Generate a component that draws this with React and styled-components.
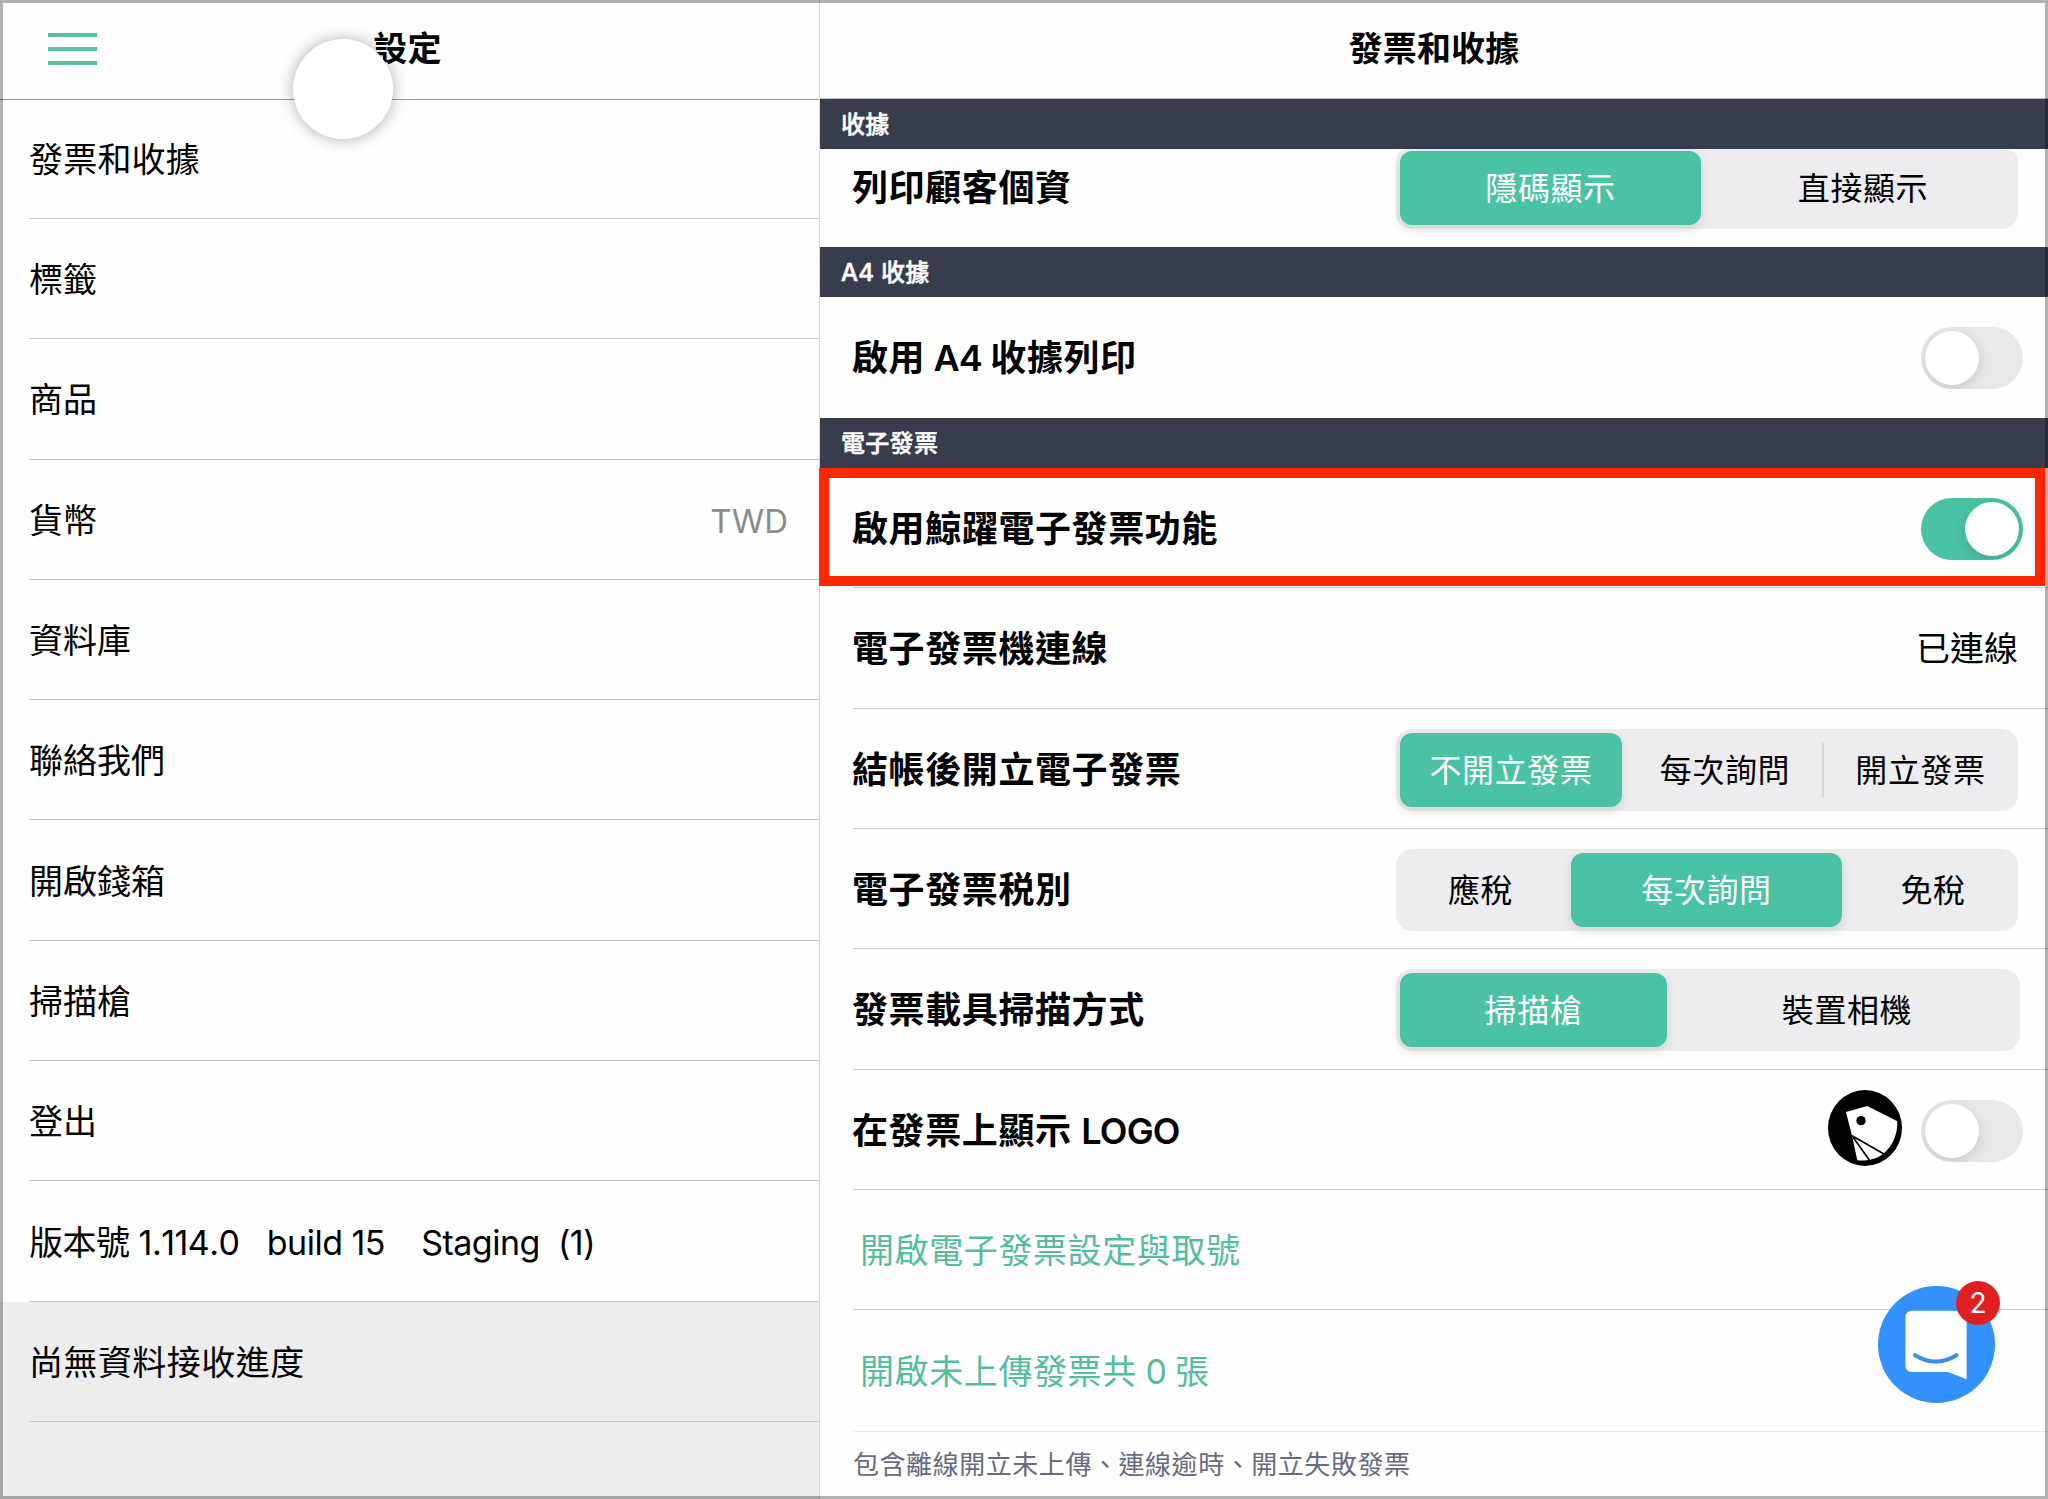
import React from "react";
import styled, { createGlobalStyle, css } from "styled-components";

const menuItems = [
    { label: "發票和收據", tracking: 0.2 },
    { label: "標籤" },
    { label: "商品" },
    { label: "貨幣", value: "TWD" },
    { label: "資料庫" },
    { label: "聯絡我們" },
    { label: "開啟錢箱" },
    { label: "掃描槍" },
    { label: "登出" },
    { label: "版本號 1.114.0   build 15    Staging  (1)", tracking: -0.5 },
    { label: "尚無資料接收進度", tracking: 0.45, muted: true },
];

const printOptions = [
    { label: "隱碼顯示", width: 301, active: true },
    { label: "直接顯示", width: 313, indent: 11 },
];
const issueOptions = [
    { label: "不開立發票", width: 222, active: true },
    { label: "每次詢問", width: 200, indent: 6 },
    { label: "開立發票", width: 192, indent: 5, divider: true },
];
const taxOptions = [
    { label: "應稅", width: 171, outdent: 10 },
    { label: "每次詢問", width: 271, active: true },
    { label: "免稅", width: 172, indent: 10 },
];
const scanOptions = [
    { label: "掃描槍", width: 267, active: true },
    { label: "裝置相機", width: 349, indent: 11 },
];

function Segmented({ options, short }) {
    return (
        <SegmentGroup $short={short}>
            {options.map((option) => (
                <Segment
                    key={option.label}
                    $width={option.width}
                    $indent={option.indent}
                    $outdent={option.outdent}
                    $active={option.active}
                    $divider={option.divider}
                >
                    {option.label}
                </Segment>
            ))}
        </SegmentGroup>
    )
}

function Switch({ on }) {
    return (
        <SwitchTrack $on={on} role="switch" aria-checked={!!on}>
            <SwitchKnob />
        </SwitchTrack>
    )
}

function ShopLogo() {
    return (
        <svg width="74" height="76" viewBox="0 0 222 228">
            <ellipse cx="111" cy="114" rx="111" ry="114" fill="#000" />
            <path d="M54 66 L118 48 L208 94 C209 132 195 166 168 190 C146 208 118 214 88 211 L72 137 Z" fill="#fff" />
            <path d="M72 137 L168 192 M72 137 L126 213" stroke="#000" strokeWidth="5" fill="none" />
            <circle cx="99" cy="92" r="14" fill="#000" />
        </svg>
    )
}

function ChatIcon() {
    return (
        <svg width="117" height="117" viewBox="0 0 350 350">
            <circle cx="175" cy="175" r="175" fill="#3391fc" />
            <path d="M102 74 H246 Q265 74 265 93 V279 L209 257 H102 Q82 257 82 237 V94 Q82 74 102 74 Z" fill="#fff" />
            <path d="M111 207 Q172 245 235 207" stroke="#3a8fe8" strokeWidth="12" strokeLinecap="round" fill="none" />
        </svg>
    )
}

export default function App() {
    return (
        <Screen>
            <GlobalStyle />
            <Sidebar>
                <Header $side>
                    <MenuButton>
                        <MenuBar />
                        <MenuBar />
                        <MenuBar />
                    </MenuButton>
                    <Title>設定</Title>
                </Header>
                <MenuList>
                    {menuItems.map((item) => (
                        <MenuItem key={item.label} $muted={item.muted}>
                            <MenuRow>
                                <MenuLabel $tracking={item.tracking}>{item.label}</MenuLabel>
                                {item.value && <MenuValue>{item.value}</MenuValue>}
                            </MenuRow>
                        </MenuItem>
                    ))}
                </MenuList>
                <SidebarRest />
                <TouchDot />
            </Sidebar>
            <Content>
                <Header>
                    <Title>發票和收據</Title>
                </Header>
                <SectionTitle>收據</SectionTitle>
                <Setting $height={98.3} $last>
                    <Label $lift={20}>列印顧客個資</Label>
                    <Segmented options={printOptions} short />
                </Setting>
                <SectionTitle>A4 收據</SectionTitle>
                <Setting $height={120.7} $last>
                    <Label>啟用<Latin> A4 </Latin>收據列印</Label>
                    <Switch />
                </Setting>
                <SectionTitle>電子發票</SectionTitle>
                <Setting $height={120.2}>
                    <Label>啟用鯨躍電子發票功能</Label>
                    <Switch on />
                    <Highlight />
                </Setting>
                <Setting>
                    <Label>電子發票機連線</Label>
                    <Status>已連線</Status>
                </Setting>
                <Setting>
                    <Label>結帳後開立電子發票</Label>
                    <Segmented options={issueOptions} />
                </Setting>
                <Setting>
                    <Label>電子發票税別</Label>
                    <Segmented options={taxOptions} />
                </Setting>
                <Setting $wide>
                    <Label>發票載具掃描方式</Label>
                    <Segmented options={scanOptions} />
                </Setting>
                <Setting>
                    <Label>在發票上顯示 <Latin>LOGO</Latin></Label>
                    <LogoControls>
                        <ShopLogo />
                        <Switch />
                    </LogoControls>
                </Setting>
                <Setting>
                    <Link>開啟電子發票設定與取號</Link>
                </Setting>
                <Setting $height={121.4} $faint>
                    <Link>開啟未上傳發票共<Latin> 0 </Latin>張</Link>
                </Setting>
                <Note>包含離線開立未上傳、連線逾時、開立失敗發票</Note>
                <ChatButton>
                    <ChatIcon />
                    <Badge>2</Badge>
                </ChatButton>
            </Content>
            <Frame />
        </Screen>
    )
}

const GlobalStyle = createGlobalStyle`
    * {
        box-sizing: border-box;
    }
    body {
        margin: 0;
        font-family: Inter, "Noto Sans CJK TC", sans-serif;
        color: #000;
        background: #fff;
    }
`
const Screen = styled.div`
    position: relative;
    display: flex;
    width: 2048px;
    height: 1499px;
    overflow: hidden;
    background-color: #fefefe;
`
const Sidebar = styled.div`
    position: relative;
    display: flex;
    flex-direction: column;
    flex: none;
    width: 820px;
    border-right: 1px solid #d9d9d9;
`
const Content = styled.div`
    position: relative;
    flex: 1;
    min-width: 0;
`
const Header = styled.div`
    display: flex;
    flex: none;
    align-items: center;
    justify-content: center;
    height: 99px;
    border-bottom: 1px solid #b9bcc0;
    ${(props) => props.$side && css`
        display: grid;
        grid-template-columns: 49px 1fr 53px;
        justify-items: center;
        height: 100px;
        margin-bottom: -1.3px;
        padding: 0 48px 2px;
        border-color: #9c9c9c;
    `}
`
const Title = styled.h1`
    margin: 0;
    font-size: 34px;
    font-weight: 600;
    line-height: 50px;
    letter-spacing: 0.2px;
`
const MenuButton = styled.div`
    display: flex;
    flex-direction: column;
    gap: 10px;
    width: 49px;
`
const MenuBar = styled.span`
    height: 4px;
    background-color: #5bbfa2;
`
const MenuList = styled.div`
    flex: none;
`
const MenuItem = styled.div`
    height: 120.3px;
    padding-left: 29px;
    background-color: ${(props) => (props.$muted ? "#ededed" : "transparent")};
`
const MenuRow = styled.div`
    display: flex;
    align-items: center;
    justify-content: space-between;
    height: 100%;
    padding: 3px 31px 0 0;
    border-bottom: 1px solid #c6c6c6;
`
const MenuLabel = styled.span`
    font-size: 34px;
    line-height: 50px;
    white-space: pre;
    font-kerning: none;
    letter-spacing: ${(props) => props.$tracking || 0}px;
`
const MenuValue = styled.span`
    font-size: 33px;
    color: #8b8b8d;
`
const SidebarRest = styled.div`
    flex: 1;
    background-color: #ededed;
`
const TouchDot = styled.div`
    position: absolute;
    left: 293px;
    top: 39px;
    width: 100px;
    height: 100px;
    border-radius: 50%;
    background-color: #fff;
    box-shadow: 0 0 16px rgba(0, 0, 0, 0.32);
`
const SectionTitle = styled.div`
    position: relative;
    display: flex;
    align-items: center;
    height: 50px;
    padding: 0 21px 3px;
    font-size: 24px;
    font-weight: 500;
    letter-spacing: 0.3px;
    -webkit-text-stroke: 0.5px #fff;
    color: #fff;
    background-color: #373d4d;
`
const Setting = styled.div`
    position: relative;
    display: flex;
    align-items: center;
    justify-content: space-between;
    height: ${(props) => props.$height || 120.35}px;
    margin-left: 33px;
    padding-top: ${(props) => (props.$last ? 0 : 3)}px;
    padding-right: ${(props) => (props.$wide ? 28 : 30)}px;
    border-bottom: ${(props) => (props.$last ? "none" : `1px solid ${props.$faint ? "#e6eaea" : "#cccccc"}`)};
`
const Label = styled.span`
    margin-left: -1px;
    font-size: 36px;
    font-weight: 600;
    line-height: 52px;
    letter-spacing: 0.6px;
    padding-bottom: ${(props) => props.$lift || 0}px;
`
const Latin = styled.span`
    letter-spacing: -0.8px;
`
const Status = styled.span`
    font-size: 34px;
    line-height: 50px;
`
const SegmentGroup = styled.div`
    display: flex;
    align-items: center;
    height: 82px;
    padding: 4px;
    border-radius: 16px;
    background-color: #ededef;
    ${(props) => props.$short && css`
        align-self: flex-start;
        height: 80px;
        padding-top: 2px;
        border-radius: 12px 12px 16px 16px;
    `}
`
const Segment = styled.div`
    position: relative;
    display: flex;
    align-items: center;
    justify-content: center;
    width: ${(props) => props.$width}px;
    height: 74px;
    padding: 0 ${(props) => props.$outdent || 0}px 4px ${(props) => props.$indent || 0}px;
    border-radius: 12px;
    font-size: 32px;
    letter-spacing: 0.6px;
    ${(props) => props.$active && css`
        color: #fff;
        background-color: #4ac3a4;
        box-shadow: 0 4px 12px rgba(0, 0, 0, 0.12);
    `}
    ${(props) => props.$divider && css`
        &::before {
            content: "";
            position: absolute;
            left: 0;
            top: 10px;
            width: 2px;
            height: 54px;
            background-color: #d6d6d9;
        }
    `}
`
const SwitchTrack = styled.div`
    display: flex;
    justify-content: ${(props) => (props.$on ? "flex-end" : "flex-start")};
    flex: none;
    width: 102px;
    height: 62px;
    margin-right: -5px;
    padding: 4px;
    overflow: hidden;
    border-radius: 31px;
    background-color: ${(props) => (props.$on ? "#4ac3a4" : "#e8e8ea")};
`
const SwitchKnob = styled.div`
    width: 54px;
    height: 54px;
    border-radius: 50%;
    background-color: #fff;
    box-shadow: 0 4px 14px rgba(0, 0, 0, 0.14);
`
const Highlight = styled.div`
    position: absolute;
    left: -34px;
    right: 3px;
    top: 0;
    height: 118px;
    border: 10px solid #ff2600;
`
const LogoControls = styled.div`
    display: flex;
    align-items: center;
    gap: 19px;

    svg {
        margin-bottom: 5px;
    }
`
const Link = styled.span`
    padding-left: 7px;
    font-size: 34px;
    line-height: 50px;
    letter-spacing: 0.6px;
    color: #55bd9f;
`
const Note = styled.div`
    padding: 14px 32px 0 33px;
    font-size: 26px;
    line-height: 38px;
    letter-spacing: 0.55px;
    color: #666c80;
`
const ChatButton = styled.div`
    position: absolute;
    right: 53px;
    bottom: 96px;
    width: 117px;
    height: 117px;
`
const Badge = styled.div`
    position: absolute;
    right: -5px;
    top: -5px;
    display: flex;
    align-items: center;
    justify-content: center;
    width: 44px;
    height: 44px;
    border-radius: 50%;
    font-size: 28px;
    color: #fff;
    background-color: #e02020;
`
const Frame = styled.div`
    position: absolute;
    inset: 0;
    border: 3px solid rgba(0, 0, 0, 0.3);
    pointer-events: none;
`
